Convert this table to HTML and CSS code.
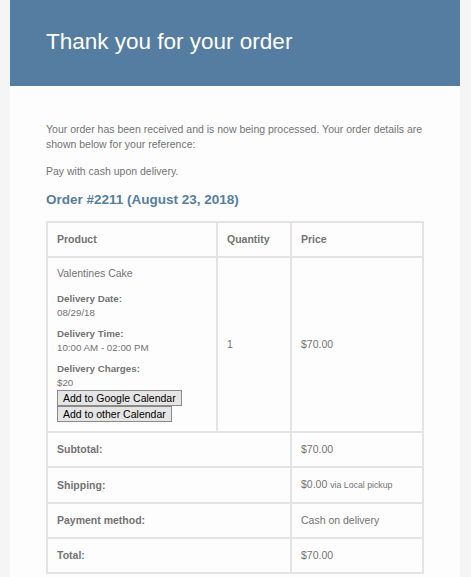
FILE: index.html
```html
<!DOCTYPE html>
<html>
<head>
<meta charset="utf-8">
<link rel="stylesheet" href="styles.css">
</head>
<body>
<div class="wrap">
  <div class="header">
    <h1 class="title">Thank you for your order</h1>
  </div>
  <div class="content">
    <p class="para">Your order has been received and is now being processed. Your order details are shown below for your reference:</p>
    <p class="para">Pay with cash upon delivery.</p>
    <h2 class="order-title">Order #2211 (August 23, 2018)</h2>
    <table class="order">
      <colgroup>
        <col class="c1"><col class="c2"><col class="c3">
      </colgroup>
      <thead>
        <tr>
          <th class="cell head">Product</th>
          <th class="cell head">Quantity</th>
          <th class="cell head">Price</th>
        </tr>
      </thead>
      <tbody>
        <tr>
          <td class="cell item">
            <div class="item-name">Valentines Cake</div>
            <ul class="meta">
              <li class="meta-row"><strong class="meta-label">Delivery Date:</strong><div class="meta-value">08/29/18</div></li>
              <li class="meta-row"><strong class="meta-label">Delivery Time:</strong><div class="meta-value">10:00 AM - 02:00 PM</div></li>
              <li class="meta-row"><strong class="meta-label">Delivery Charges:</strong><div class="meta-value">$20</div></li>
            </ul>
            <div class="btns">
              <button class="btn">Add to Google Calendar</button>
              <button class="btn">Add to other Calendar</button>
            </div>
          </td>
          <td class="cell mid">1</td>
          <td class="cell mid">$70.00</td>
        </tr>
      </tbody>
      <tfoot>
        <tr>
          <th class="cell label" colspan="2">Subtotal:</th>
          <td class="cell">$70.00</td>
        </tr>
        <tr>
          <th class="cell label" colspan="2">Shipping:</th>
          <td class="cell">$0.00 <small class="via">via Local pickup</small></td>
        </tr>
        <tr>
          <th class="cell label" colspan="2">Payment method:</th>
          <td class="cell">Cash on delivery</td>
        </tr>
        <tr>
          <th class="cell label" colspan="2">Total:</th>
          <td class="cell">$70.00</td>
        </tr>
      </tfoot>
    </table>
  </div>
</div>
</body>
</html>
```

FILE: styles.css
```css
html, body {
  margin: 0;
  padding: 0;
  background: #f5f5f5;
  font-family: "Liberation Sans", Arial, sans-serif;
}
.wrap {
  width: 450px;
  margin: 0 0 0 10px;
  background: #fdfdfd;
  min-height: 577px;
}
.header {
  background: #557da1;
  padding: 25px 36px 27px;
}
.title {
  margin: 0;
  color: #ffffff;
  font-size: 22.5px;
  font-weight: 300;
  line-height: 34px;
}
.content {
  padding: 36px 36px 0;
  color: #737373;
  font-size: 10.5px;
  line-height: 15px;
}
.para {
  margin: 0 0 12px;
}
.order-title {
  margin: 0 0 12.5px;
  color: #557da1;
  font-size: 13.5px;
  line-height: 17.5px;
  font-weight: bold;
}
.order {
  width: 378px;
  table-layout: fixed;
  border-collapse: separate;
  border-spacing: 0;
  border: 1px solid #e4e4e4;
  color: #737373;
  font-size: 10.5px;
  line-height: 15px;
}
.c1 { width: 170px; }
.c2 { width: 74px; }
.c3 { width: 132px; }
.cell {
  border: 1px solid #e4e4e4;
  padding: 9px;
  text-align: left;
  vertical-align: middle;
}
.head, .label {
  font-weight: bold;
}
.item {
  vertical-align: top;
}
.item-name {
  margin-top: -1px;
}
.meta {
  list-style: none;
  margin: 11px 0 0;
  padding: 0;
  font-size: 9.75px;
  line-height: 14px;
}
.meta-row {
  margin-top: 7px;
}
.meta-row:first-child {
  margin-top: 0;
}
.meta-label {
  display: block;
  font-weight: bold;
}
.btns {
  display: flex;
  flex-direction: column;
  align-items: flex-start;
  margin-top: 0;
}
.btn {
  font-family: "Liberation Sans", Arial, sans-serif;
  font-size: 10.5px;
  line-height: 13px;
  height: 16px;
  padding: 0 5px;
  margin: 0;
  color: #000000;
  background: #e5e5e5;
  border: 1px solid #8a8a8a;
  border-radius: 0;
}
.via {
  font-size: 8.75px;
}
```
